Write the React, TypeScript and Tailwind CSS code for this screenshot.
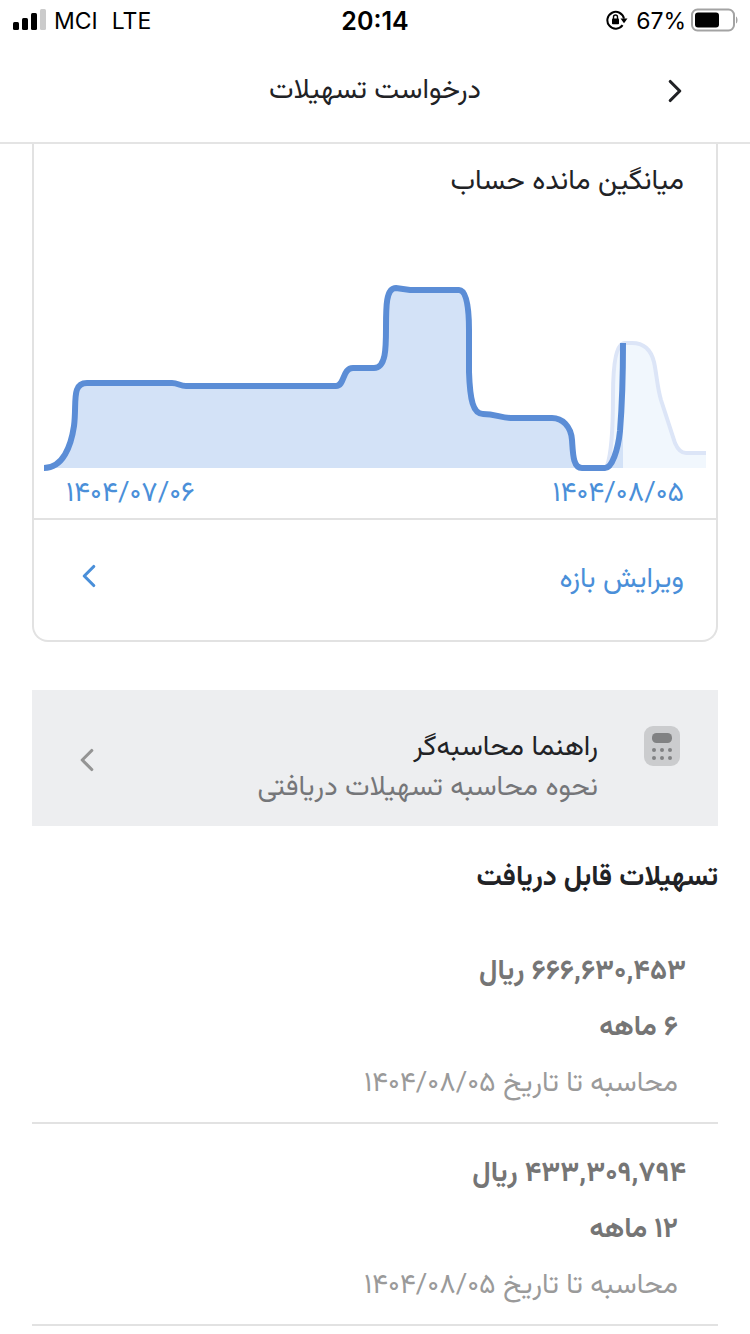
import React from "react";
import { ChevronLeft, ChevronRight } from "lucide-react";

interface Facility {
  amount: string;
  months: string;
  date: string;
}

const facilities: Facility[] = [
  { amount: "۶۶۶,۶۳۰,۴۵۳", months: "۶", date: "۱۴۰۴/۰۸/۰۵" },
  { amount: "۴۳۳,۳۰۹,۷۹۴", months: "۱۲", date: "۱۴۰۴/۰۸/۰۵" },
];

function StatusBar() {
  return (
    <div
      dir="ltr"
      className="grid h-10 grid-cols-3 items-center px-3 font-['Inter',sans-serif] text-[23px] leading-7 text-black"
    >
      <div className="flex items-center gap-2">
        <svg width="34" height="22" viewBox="0 0 34 22" aria-hidden="true">
          <rect x="1" y="13" width="6" height="8" rx="1.5" />
          <rect x="10" y="9" width="6" height="12" rx="1.5" />
          <rect x="19" y="4" width="6" height="17" rx="1.5" />
          <rect x="28" y="0" width="6" height="21" rx="1.5" fill="#cbcbcb" />
        </svg>
        <span className="pt-0.5">MCI</span>
        <span className="ml-1.5 pt-0.5">LTE</span>
      </div>
      <div className="pt-0.5 text-center text-[25px] font-semibold">20:14</div>
      <div className="flex items-center justify-end gap-1">
        <svg width="22" height="20" viewBox="0 0 22 20" fill="none" className="mr-1" aria-hidden="true">
          <path d="M16.6 15.2A8.4 8.4 0 1 1 18 8.6" stroke="#000" strokeWidth="2" />
          <path d="M14.5 8.6h7l-3.5 4.6z" fill="#000" />
          <rect x="6" y="8.4" width="7" height="5.8" rx="0.8" fill="#000" />
          <path d="M7.5 9V7a2 2 0 0 1 4 0V9" stroke="#000" strokeWidth="1.4" />
        </svg>
        <span className="pt-0.5">67%</span>
        <svg width="48" height="24" viewBox="0 0 48 24" fill="none" aria-hidden="true">
          <rect x="2" y="1.5" width="42" height="21" rx="5.5" stroke="#a3a3a3" strokeWidth="2" />
          <rect x="5" y="4.5" width="24" height="15" rx="3" fill="#000" />
          <path d="M46 8.5c2 1 2 6 0 7z" fill="#a3a3a3" />
        </svg>
      </div>
    </div>
  );
}

function BalanceChart() {
  return (
    <svg
      viewBox="0 0 682 196"
      className="block h-auto w-full"
      fill="none"
      role="img"
      aria-label="میانگین مانده حساب"
    >
      {/* days outside of the selected range */}
      <path
        d="M573 190C578 176 579 142 579 120C579 84 583 67 591 67H598C610 67 617 74 620 86C623 100 623 110 627 124L641 167C644 174 647 177 652 177H672V192H571Z"
        fill="#f1f7fd"
      />
      <path
        d="M573 190C578 176 579 142 579 120C579 84 583 67 591 67H598C610 67 617 74 620 86C623 100 623 110 627 124L641 167C644 174 647 177 652 177H672"
        stroke="#dce5f7"
        strokeWidth="4"
      />
      {/* selected range */}
      <path
        d="M10 192C29 192 37 170 40 150C43 127 37 107 53 107H138C144 107 146 110 152 110H302C311 110 308 92 319 92H340C352 92 352 72 352 52C352 30 352 12 362 12L376 14H425C433 14 435 34 435 54V96C436 124 439 138 449 138C462 138 467 142 479 142H518C528 142 537 150 538 164C539 178 539 192 548 192H571C578 192 584 174 586 155C588 130 589 109 589 67V192Z"
        fill="#d3e2f7"
      />
      <path
        d="M10 192C29 192 37 170 40 150C43 127 37 107 53 107H138C144 107 146 110 152 110H302C311 110 308 92 319 92H340C352 92 352 72 352 52C352 30 352 12 362 12L376 14H425C433 14 435 34 435 54V96C436 124 439 138 449 138C462 138 467 142 479 142H518C528 142 537 150 538 164C539 178 539 192 548 192H571C578 192 584 174 586 155C588 130 589 109 589 67"
        stroke="#5b8dd6"
        strokeWidth="6"
      />
    </svg>
  );
}

function CalculatorIcon() {
  return (
    <svg
      width="36"
      height="40"
      viewBox="0 0 36 40"
      className="mt-9 self-start"
      aria-hidden="true"
    >
      <rect width="36" height="40" rx="9" fill="#cbccce" />
      <rect x="8" y="7" width="20" height="10" rx="4.5" fill="#818283" />
      {[24, 32].map((y) =>
        [10, 18, 26].map((x) => (
          <circle key={`${x}-${y}`} cx={x} cy={y} r="2" fill="#818283" />
        ))
      )}
    </svg>
  );
}

function FacilityItem({ amount, months, date }: Facility) {
  return (
    <li className="border-b-2 border-[#e2e2e2] px-8 pt-5.5 pb-2.5">
      <p className="leading-14 font-bold text-[#757575]">{amount} ریال</p>
      <p className="px-2 leading-14 font-bold text-[#757575]">{months} ماهه</p>
      <p className="px-2 leading-14 text-[#9a9a9a]">محاسبه تا تاریخ {date}</p>
    </li>
  );
}

export default function App() {
  return (
    <div
      dir="rtl"
      className="bg-white font-['Vazirmatn','Noto_Sans_Arabic','DejaVu_Sans',sans-serif] text-[28px] text-[#212225]"
    >
      <StatusBar />

      <header className="grid h-26 grid-cols-[1fr_auto_1fr] items-center border-b-2 border-[#e4e4e4] px-14">
        <button type="button" aria-label="بازگشت" className="justify-self-start">
          <ChevronRight size={38} strokeWidth={2} />
        </button>
        <h1>درخواست تسهیلات</h1>
      </header>

      <main className="px-8">
        <section className="rounded-b-2xl border-2 border-t-0 border-[#e2e2e2]">
          <h2 className="px-8 pt-4.5 leading-10">میانگین مانده حساب</h2>
          <div className="pt-18.5">
            <BalanceChart />
          </div>
          <div className="flex items-center justify-between px-8 pt-0.5 pb-1 leading-10 text-[#4a8fd9]">
            <span>۱۴۰۴/۰۸/۰۵</span>
            <span>۱۴۰۴/۰۷/۰۶</span>
          </div>
          <button
            type="button"
            className="flex h-30.5 w-full items-center justify-between border-t-2 border-[#e2e2e2] pr-8 pl-9 text-[#4a8fd9]"
          >
            <span>ویرایش بازه</span>
            <ChevronLeft size={38} strokeWidth={2} className="mb-2" />
          </button>
        </section>

        <button
          type="button"
          className="mt-12 flex h-34 w-full items-center bg-[#edeef0] pr-9.5 pl-9 text-start"
        >
          <CalculatorIcon />
          <span className="flex-1 pt-5 pr-11.5 leading-10">
            <span className="block">راهنما محاسبه‌گر</span>
            <span className="block text-[#757679]">نحوه محاسبه تسهیلات دریافتی</span>
          </span>
          <ChevronLeft size={38} strokeWidth={2} className="mt-1 text-[#949494]" />
        </button>

        <h2 className="pt-8 pb-6 leading-10 font-bold">تسهیلات قابل دریافت</h2>
        <ul>
          {facilities.map((facility) => (
            <FacilityItem key={facility.amount} {...facility} />
          ))}
        </ul>
      </main>
    </div>
  );
}
